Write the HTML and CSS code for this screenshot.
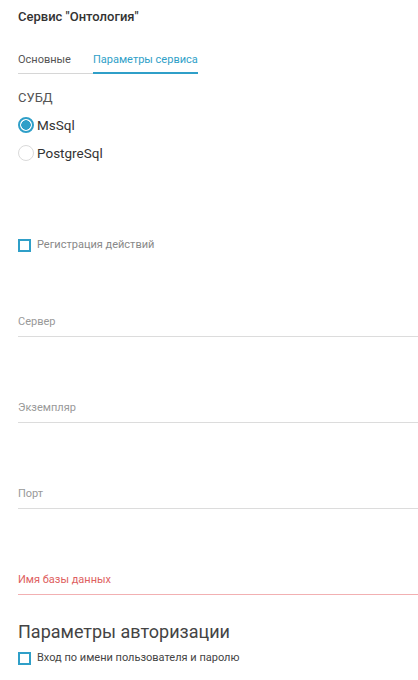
FILE: index.html
```html
<!DOCTYPE html>
<html lang="ru">
<head>
<meta charset="utf-8">
<link rel="stylesheet" href="styles.css">
</head>
<body>
<div class="page">
  <h1 class="title">Сервис "Онтология"</h1>
  <div class="tabs">
    <div class="tab">Основные</div>
    <div class="tab tab-active">Параметры сервиса</div>
  </div>
  <div class="group-label">СУБД</div>
  <div class="radios">
    <label class="radio-row"><span class="radio radio-on"></span><span class="radio-text">MsSql</span></label>
    <label class="radio-row"><span class="radio"></span><span class="radio-text">PostgreSql</span></label>
  </div>
  <label class="check-row check-log"><span class="checkbox"></span><span class="check-text muted">Регистрация действий</span></label>
  <div class="fields">
    <div class="field field-first"><span class="field-label">Сервер</span></div>
    <div class="field"><span class="field-label">Экземпляр</span></div>
    <div class="field"><span class="field-label">Порт</span></div>
    <div class="field field-error"><span class="field-label">Имя базы данных</span></div>
  </div>
  <h2 class="section">Параметры авторизации</h2>
  <label class="check-row check-auth"><span class="checkbox"></span><span class="check-text">Вход по имени пользователя и паролю</span></label>
</div>
</body>
</html>
```
FILE: styles.css
```css
* { box-sizing: border-box; }
html, body { margin: 0; padding: 0; background: #fff; }
body { font-family: Roboto, "Noto Sans", sans-serif; color: #333; }
.page { padding: 8px 0 0 18px; }
.title { margin: 0; font-size: 13px; font-weight: 500; line-height: 18px; color: #333; }
.tabs { display: flex; margin-top: 26px; }
.tab { font-size: 11px; line-height: 15px; color: #555; white-space: nowrap; padding-bottom: 6px; border-bottom: 1px solid #d6d6d6; padding-right: 22px; }
.tab-active { color: #2f9fc8; border-bottom: 2px solid #2f9fc8; padding-right: 0; padding-bottom: 5px; }
.group-label { margin-top: 15px; font-size: 13px; line-height: 18px; color: #555; }
.radios { margin-top: 10px; display: flex; flex-direction: column; gap: 12px; }
.radio-row { display: flex; align-items: center; gap: 3px; height: 16px; }
.radio { width: 16px; height: 16px; border-radius: 50%; border: 1px solid #dadada; background: #fff; flex: none; }
.radio-on { border: 2px solid #2f9fc8; background: radial-gradient(circle, #2f9fc8 0 4.5px, #fff 5px); }
.radio-text { font-size: 13.5px; color: #333; line-height: 16px; }
.check-row { display: flex; align-items: center; gap: 6px; }
.check-log { margin-top: 77px; }
.checkbox { width: 13px; height: 13px; border: 2px solid #2f9fc8; flex: none; }
.check-text { font-size: 11px; line-height: 14px; color: #444; white-space: nowrap; }
.muted { color: #888; }
.fields { display: flex; flex-direction: column; margin-top: 63px; }
.field { height: 86px; display: flex; align-items: flex-end; border-bottom: 1px solid #dcdcdc; padding-bottom: 7px; }
.field-first { height: auto; }
.field-label { font-size: 11px; line-height: 14px; color: #999; }
.field-error { border-bottom-color: #f2b0b2; }
.field-error .field-label { color: #de6060; }
.section { margin: 26px 0 0; font-size: 18px; font-weight: 400; line-height: 22px; color: #444; }
.check-auth { margin-top: 8px; }
```
